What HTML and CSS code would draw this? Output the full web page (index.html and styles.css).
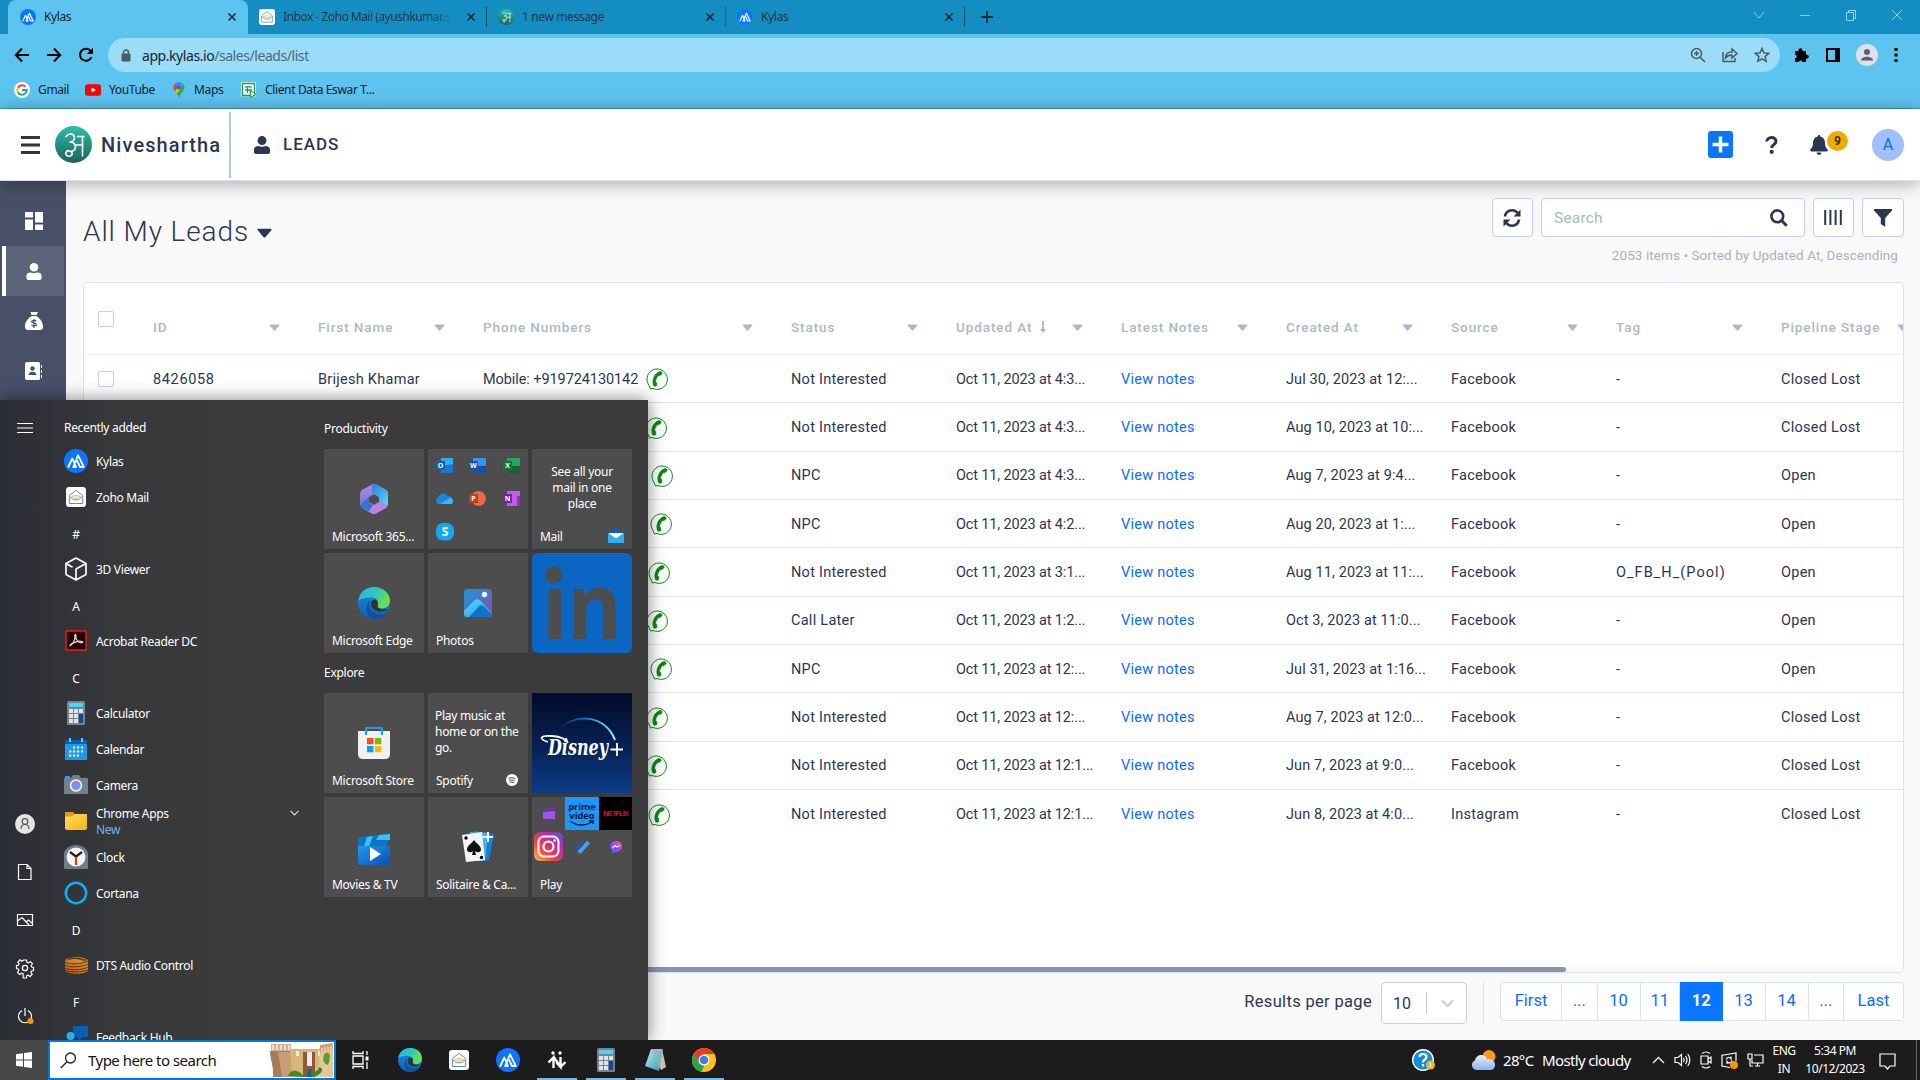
FILE: index.html
```html
<!DOCTYPE html>
<html lang="en">
<head>
<meta charset="utf-8">
<title>Kylas</title>
<link rel="stylesheet" href="styles.css">
</head>
<body>
<svg class="defs" width="0" height="0" aria-hidden="true">
  <defs>
    <linearGradient id="gTeal" x1="0" y1="0" x2="0" y2="1"><stop offset="0" stop-color="#2dbfae"/><stop offset="1" stop-color="#1a6358"/></linearGradient>
    <linearGradient id="gEdge" x1="0" y1="0" x2="1" y2="0.4"><stop offset="0" stop-color="#2bb5e8"/><stop offset=".55" stop-color="#2fc6c0"/><stop offset="1" stop-color="#6be04a"/></linearGradient>
    <linearGradient id="gEdge2" x1="0" y1="0" x2="0" y2="1"><stop offset="0" stop-color="#1a8fe0"/><stop offset="1" stop-color="#0a5fb4"/></linearGradient>
    <linearGradient id="gInsta" x1="0" y1="1" x2="1" y2="0"><stop offset="0" stop-color="#fec053"/><stop offset=".35" stop-color="#f2443e"/><stop offset=".65" stop-color="#c32aa3"/><stop offset="1" stop-color="#5b4fd6"/></linearGradient>
    <linearGradient id="gPhoto" x1="0" y1="0" x2="1" y2="1"><stop offset="0" stop-color="#1697dc"/><stop offset="1" stop-color="#8a4fa8"/></linearGradient>
    <linearGradient id="gPeak" x1="0" y1="0" x2="1" y2="1"><stop offset="0" stop-color="#5ee2ff"/><stop offset="1" stop-color="#1790dc"/></linearGradient>
    <linearGradient id="gFolder" x1="0" y1="0" x2="1" y2="1"><stop offset="0" stop-color="#ffdb66"/><stop offset="1" stop-color="#f8b50c"/></linearGradient>
    <linearGradient id="gMovie" x1="0" y1="0" x2="1" y2="1"><stop offset="0" stop-color="#1f9be8"/><stop offset="1" stop-color="#0a4fb8"/></linearGradient>
    <linearGradient id="gArc" x1="0" y1="0" x2="1" y2="0"><stop offset="0" stop-color="#04103f"/><stop offset=".5" stop-color="#0b7fd0"/><stop offset="1" stop-color="#8ffcff"/></linearGradient>
    <linearGradient id="gMsg" x1="0" y1="1" x2="1" y2="0"><stop offset="0" stop-color="#1e7bff"/><stop offset=".5" stop-color="#a43cff"/><stop offset="1" stop-color="#ff6a68"/></linearGradient>
    <linearGradient id="gLens" x1="0" y1="0" x2="1" y2="1"><stop offset="0" stop-color="#c06be0"/><stop offset="1" stop-color="#3fb4f0"/></linearGradient>
    <linearGradient id="gCloud" x1="0" y1="0" x2="0" y2="1"><stop offset="0" stop-color="#e8f0fc"/><stop offset="1" stop-color="#8ab4f0"/></linearGradient>
    <linearGradient id="gNote" x1="0" y1="0" x2="1" y2="1"><stop offset="0" stop-color="#c9f1f5"/><stop offset="1" stop-color="#2a93aa"/></linearGradient>
    <linearGradient id="gDts" x1="0" y1="1" x2=".7" y2="0"><stop offset="0" stop-color="#c9501e"/><stop offset="1" stop-color="#d9a11e"/></linearGradient>
    <linearGradient id="gMA" x1="0" y1="0" x2="0" y2="1"><stop offset="0" stop-color="#b48ae6"/><stop offset="1" stop-color="#5d6fd0"/></linearGradient>
    <linearGradient id="gMB" x1="0" y1="0" x2="1" y2="1"><stop offset="0" stop-color="#2b7fd8"/><stop offset="1" stop-color="#5ad8fb"/></linearGradient>
  </defs>
  <symbol id="kylas" viewBox="0 0 24 24"><circle cx="12" cy="12" r="12" fill="#0a76ff"/><path d="M4.300 18 8.300 9.500 12 18H9.200L14 6.300 19.800 18H16L13.200 12" fill="none" stroke="#fff" stroke-width="1.800" stroke-linejoin="round" stroke-linecap="round"/></symbol>
  <symbol id="zoho" viewBox="0 0 20 20"><rect width="20" height="20" rx="3" fill="#fff"/><path d="M3.300 8.500 10 3.300l6.700 5.200V16.500H3.300z" fill="#fff" stroke="#5f8ec9" stroke-width="1"/><path d="M4 9.500c2.500 4.500 9.500 4.500 12 0" fill="none" stroke="#5f8ec9"/><path d="M5.500 9.500c3-1.300 6-1.300 9 0-2.500 2.300-6.500 2.300-9 0z" fill="#fff1d6" stroke="#f2bd6a"/></symbol>
  <symbol id="nivesh" viewBox="0 0 37 37"><circle cx="18.500" cy="18.500" r="18.500" fill="url(#gTeal)"/><path d="M11 10.500c3-4 8.500-3 8.500 1.500 0 3-3 4-5 4 4 0 6 2 6 5 0 4-5 5.500-8 3.500M19.500 19h8.500M22.500 10.500h6.500M27.500 10.500V30M12 25c-3 3 0 6 3 5 3.500-1 2.500-5-1-5" fill="none" stroke="#fff" stroke-width="1.600" stroke-linecap="round"/></symbol>
  <symbol id="x" viewBox="0 0 10 10"><path d="M1.500 1.500l7 7M8.500 1.500l-7 7" stroke="currentColor" stroke-width="1.700"/></symbol>
  <symbol id="caret" viewBox="0 0 12 8"><path d="M.8.500h10.400q.8.400.2 1.200L6.900 7.200q-.9.800-1.800 0L.6 1.700Q0 .9.800.500z" fill="currentColor"/></symbol>
  <symbol id="person" viewBox="0 0 16 18"><circle cx="8" cy="4.600" r="4.500" fill="currentColor"/><path d="M0 16v-2.500C0 11.200 2 10 4.500 10c2.200 1 4.800 1 7 0C14 10 16 11.200 16 13.500V16c0 1.200-.8 2-2 2H2c-1.200 0-2-.8-2-2z" fill="currentColor"/></symbol>
  <symbol id="wa" viewBox="0 0 22 22"><path d="M2.800 17A10.200 10.200 0 1 1 7 20.500L4.500 21z" fill="#fff" stroke="#0a8a12" stroke-width="1"/><path d="M14.500 3.600c-5.500.8-9 8-7 14 .3.900 3.200.8 3.300-.3l-.2-2.400c0-.9-1.100-.8-1.100-1.600.2-2 1.400-4.200 2.700-5.600.6-.4 1.200.3 1.900-.1l1.700-1.700c.6-.8-.1-2.500-1.300-2.300z" fill="#078a10" stroke="#078a10" stroke-width=".8"/></symbol>
  <symbol id="edge" viewBox="0 0 32 32"><circle cx="16" cy="16" r="16" fill="url(#gEdge2)"/><path d="M.5 13C2 5 8 0 16 0c9.500 0 16 6.500 16 13.500 0 5-3.500 8-7.500 8-4 0-5.500-1.700-5-3 1.400-1.500 1-7.500-5.500-8C8 10 2 12.500.5 13z" fill="url(#gEdge)"/><path d="M12 13c-3.500 7 2 14.500 9 14.500 4.500 0 7.500-1.500 8.500-2.500C26.500 30 21.500 32 17 32 9 31 6 20 12 13z" fill="#10519f"/><path d="M14 13.500c-3 3.500 0 10.500 7 11 4 .3 7-.8 9-2.500-5 1-10.500 0-10.500-3.500 1-1.500.5-5-2-6z" fill="#303438"/></symbol>
  <symbol id="calc" viewBox="0 0 18 24"><rect width="18" height="24" rx="1.500" fill="#77828e"/><rect x="2" y="2" width="14" height="4" fill="#4fd3fb"/><path d="M2 8h4v4H2zM7 8h4v4H7zM12 8h4v4h-4zM2 13h4v4H2zM7 13h4v4H7zM2 18h4v4H2zM7 18h4v4H7z" fill="#dde4ea"/><path d="M12 13h4v9h-4z" fill="#0d4a92"/></symbol>
</svg>

<main class="window">
  <div class="tabstrip">
    <div class="tab tab-active"><svg width="16" height="16"><use href="#kylas"/></svg><span class="tab-title">Kylas</span><svg class="tab-x" width="10" height="10"><use href="#x"/></svg></div>
    <div class="tab"><svg width="16" height="16"><use href="#zoho"/></svg><span class="tab-title fade">Inbox - Zoho Mail (ayushkumar.s</span><svg class="tab-x" width="10" height="10"><use href="#x"/></svg></div>
    <div class="tab"><svg width="16" height="16"><use href="#nivesh"/></svg><span class="tab-title">1 new message</span><svg class="tab-x" width="10" height="10"><use href="#x"/></svg></div>
    <div class="tab"><svg width="16" height="16"><use href="#kylas"/></svg><span class="tab-title">Kylas</span><svg class="tab-x" width="10" height="10"><use href="#x"/></svg></div>
    <svg class="newtab" width="14" height="14" viewBox="0 0 14 14"><path d="M7 1v12M1 7h12" stroke="#1b2a33" stroke-width="1.800"/></svg>
    <div class="wincontrols">
      <svg width="12" height="12" viewBox="0 0 12 12"><path d="M1 3l5 6 5-6"/></svg>
      <svg width="12" height="12" viewBox="0 0 12 12"><path d="M1 6.500h10"/></svg>
      <svg width="12" height="12" viewBox="0 0 12 12"><path d="M1.500 3.500h7v8h-7zM3.500 3.500v-2h7v8h-2"/></svg>
      <svg width="12" height="12" viewBox="0 0 12 12"><path d="M1 1l10 10M11 1L1 11"/></svg>
    </div>
  </div>

  <div class="toolbar">
    <svg width="16" height="16" viewBox="0 0 16 16"><path d="M15 8H2M8 1.500 1.800 8 8 14.500" fill="none" stroke="#000" stroke-width="2"/></svg>
    <svg width="16" height="16" viewBox="0 0 16 16"><path d="M1 8h13M8 1.500 14.200 8 8 14.500" fill="none" stroke="#000" stroke-width="2"/></svg>
    <svg width="16" height="16" viewBox="0 0 16 16"><path d="M13.500 10.200A6 6 0 1 1 12.700 4" fill="none" stroke="#000" stroke-width="2"/><path d="M15 .8V7H8.800z"/></svg>
    <div class="omnibox">
      <svg width="10" height="13" viewBox="0 0 10 13"><path d="M1 5h8v7H1z" fill="#4c5a63" stroke="#4c5a63"/><path d="M2.500 5V3.500a2.500 2.500 0 0 1 5 0V5" fill="none" stroke="#4c5a63" stroke-width="1.400"/></svg>
      <span class="url"><b>app.kylas.io</b>/sales/leads/list</span>
      <div class="omni-icons">
        <svg width="16" height="16" viewBox="0 0 16 16"><circle cx="6.500" cy="6.500" r="5"/><path d="M10.200 10.200 15 15M6.500 4v5M4 6.500h5"/></svg>
        <svg width="16" height="16" viewBox="0 0 16 16"><path d="M1 5v9.500h12V11M3.500 11c0-4 2.500-6 6.500-6V2l5 4.500-5 4.500V8C7 8 5 9 3.500 11z" stroke-width="1.200"/></svg>
        <svg width="16" height="16" viewBox="0 0 16 16"><path d="M8 1.500l1.900 4.400 4.800.5-3.600 3.200 1 4.700L8 11.900l-4.100 2.400 1-4.700L1.300 6.400l4.800-.5z"/></svg>
      </div>
    </div>
    <svg class="ext" width="16" height="16" viewBox="0 0 16 16"><path d="M1 4h3.700a2 2 0 1 1 3.600 0H12v3.800a2 2 0 1 1 0 3.700V15H8.500a1.800 1.800 0 0 0-3.500 0H1v-3.700a1.800 1.800 0 0 0 0-3.600z"/></svg>
    <svg width="14" height="14" viewBox="0 0 14 14"><path d="M1 1h12v12H1z" fill="none" stroke="#000" stroke-width="2"/><path d="M9 1h4v12H9z"/></svg>
    <svg width="22" height="22" viewBox="0 0 22 22"><circle cx="11" cy="11" r="11" fill="#dfe1e6"/><circle cx="11" cy="8" r="3" fill="#56607a"/><path d="M5 16.500c0-5 12-5 12 0z" fill="#56607a"/></svg>
    <svg width="4" height="14" viewBox="0 0 4 14"><path d="M.5 0h3v3h-3zM.5 5.500h3v3h-3zM.5 11h3v3h-3z"/></svg>
  </div>

  <div class="bookmarks">
    <svg width="16" height="16" viewBox="0 0 16 16"><circle cx="8" cy="8" r="8" fill="#fff"/><g fill="none" stroke-width="2"><path d="M11.400 4.600A4.700 4.700 0 0 0 3.900 5.800" stroke="#ea4335"/><path d="M3.900 5.700a4.700 4.700 0 0 0 0 4.600" stroke="#fbbc05"/><path d="M3.900 10.200a4.700 4.700 0 0 0 7.300 1.300" stroke="#34a853"/><path d="M11.200 11.500A4.700 4.700 0 0 0 12.700 8H8" stroke="#4285f4"/></g></svg><span class="bm-gmail">Gmail</span>
    <svg width="16" height="16" viewBox="0 0 16 16"><rect y="2.300" width="16" height="11.400" rx="2.500" fill="#f00"/><path d="M6.500 5.500v5L11 8z" fill="#fff"/></svg><span class="bm-yt">YouTube</span>
    <svg width="14" height="16" viewBox="0 0 14 16"><path d="M7 0a5.500 5.500 0 0 0-4.300 9L10.800 1.600A5.500 5.500 0 0 0 7 0z" fill="#4285f4"/><path d="M2.700 2 1.500 5.500C1.500 8 3 9 4 10.300l3-3.600z" fill="#ea4335"/><path d="M4 10.300 10.900 1.700c2 1.600 2.200 4.800.4 7C9.500 11 8 12.500 7 16c-.7-2.500-1.500-4-3-5.700z" fill="#34a853"/><path d="M3 9l3-3.500 2.500 2L5 11.600z" fill="#fbbc04"/><circle cx="7" cy="5.500" r="2" fill="#1a73e8"/></svg><span class="bm-maps">Maps</span>
    <svg width="16" height="16" viewBox="0 0 16 16"><path d="M0 0h15v14.500H0z" fill="#eefaf2"/><path d="M1.500 1.500h12v12h-12z" fill="#fff" stroke="#1d9a4a" stroke-width="1.300"/><path d="M4 4.800h7M4 8h7M6.500 4.800V11" stroke="#1d9a4a" stroke-width="1.300" fill="none"/><path d="M9.500 9 15 12l-5.500 3.500z" fill="#fff" stroke="#1d9a4a"/></svg><span>Client Data Eswar T...</span>
  </div>

  <header class="apphead">
    <svg width="19" height="18" viewBox="0 0 19 18"><path d="M0 1.500h19M0 9h19M0 16.500h19" stroke="#2d3650" stroke-width="3"/></svg>
    <svg class="brandlogo" width="37" height="37"><use href="#nivesh"/></svg>
    <span class="brand">Niveshartha</span>
    <span class="headrule"></span>
    <svg class="navy" width="16" height="18"><use href="#person"/></svg>
    <span class="section">LEADS</span>
    <div class="headright">
      <span class="plus"><svg width="17" height="17" viewBox="0 0 17 17"><path d="M8.500.5v16M.5 8.500h16" stroke="#fff" stroke-width="3.400"/></svg></span>
      <svg class="question" width="13" height="18" viewBox="0 0 13 18"><path d="M1.800 5.500C1.800.5 11 .2 11 5.200c0 3.300-4.300 3-4.300 6.800" fill="none" stroke="#2d3650" stroke-width="3"/><circle cx="6.700" cy="15.800" r="2.100" fill="#2d3650"/></svg>
      <svg class="bell" width="18" height="20" viewBox="0 0 18 20"><path d="M9 0c.9 0 1.300.6 1.300 1.400 3 .7 4.700 3 4.700 6.100 0 4.500 1.300 5.500 2.500 6.800.8 1 .2 2.200-1 2.200h-15c-1.200 0-1.800-1.200-1-2.200C1.700 13 3 12 3 7.500c0-3.100 1.700-5.400 4.700-6.100C7.700.6 8.100 0 9 0zM6.500 17.500h5a2.500 2.500 0 0 1-5 0z" fill="#2d3650"/></svg>
      <span class="badge">9</span>
      <span class="avatar">A</span>
    </div>
  </header>

  <div class="appbody">
    <nav class="sidebar">
      <span class="side"><svg width="18" height="18" viewBox="0 0 18 18"><path d="M0 0h8v5.500H0zM0 7.500h8V18H0zM10 0h8v10.500h-8zM10 12.500h8V18h-8z" fill="#fff"/></svg></span>
      <span class="side side-on"><svg width="16" height="17"><use href="#person"/></svg></span>
      <span class="side"><svg width="18" height="18" viewBox="0 0 18 18"><path d="M5.500 0h7.500L11.500 3h-5zM6.500 4h5C15 6.500 18 10 18 14.500c0 2.500-1 3.500-3 3.500H3c-2 0-3-1-3-3.500C0 10 3 6.500 6.500 4z" fill="#fff"/><path d="M11.300 9.200c-.8-1-4.600-1.200-4.600.5 0 1.800 4.800.8 4.800 2.900 0 1.800-4 1.700-5 .4M9 7v9" fill="none" stroke="#475067" stroke-width="1.200"/></svg></span>
      <span class="side"><svg width="17" height="18" viewBox="0 0 17 18"><path d="M2 0h11.500q1.500 0 1.500 1.500v15q0 1.500-1.500 1.500H2q-2 0-2-2V2Q0 0 2 0zM16 3h1v3h-1zM16 8h1v3h-1zM16 13h1v3h-1z" fill="#fff"/><circle cx="7.500" cy="6.500" r="2.200" fill="#475067"/><path d="M3.500 13c0-4.500 8-4.500 8 0z" fill="#475067"/></svg></span>
    </nav>

    <section class="content">
      <div class="pagehead">
        <h1>All My Leads</h1><svg class="navy titlecaret" width="15" height="10"><use href="#caret"/></svg>
        <div class="tools">
          <div class="toolrow">
            <span class="tool tool-a"><svg width="18" height="18" viewBox="0 0 18 18"><path d="M2 7.500A7 7 0 0 1 14.500 4M16 10.500A7 7 0 0 1 3.500 14" fill="none" stroke="#2d3650" stroke-width="2.600"/><path d="M17.500.5v7h-7zM.5 17.500v-7h7z" fill="#2d3650"/></svg></span>
            <span class="tool search"><span>Search</span><svg width="18" height="18" viewBox="0 0 18 18"><circle cx="7.300" cy="7.300" r="5.900" fill="none" stroke="#2d3650" stroke-width="2.600"/><path d="M11.500 11.500 16.700 16.700" stroke="#2d3650" stroke-width="3"/></svg></span>
            <span class="tool tool-a"><svg width="18" height="15" viewBox="0 0 18 15"><path d="M1.200 0v15M6.400 0v15M11.600 0v15M16.800 0v15" stroke="#2d3650" stroke-width="2"/></svg></span>
            <span class="tool tool-b"><svg width="18" height="18" viewBox="0 0 18 18"><path d="M0 0h18v1.500L11.200 9v9L6.800 15V9L0 1.500z" fill="#2d3650"/></svg></span>
          </div>
          <div class="count">2053 items • Sorted by Updated At, Descending</div>
        </div>
      </div>

      <div class="card">
        <div class="row thead">
          <span class="box"></span>
          <span class="th">ID<svg width="11" height="7"><use href="#caret"/></svg></span>
          <span class="th">First Name<svg width="11" height="7"><use href="#caret"/></svg></span>
          <span class="th">Phone Numbers<svg width="11" height="7"><use href="#caret"/></svg></span>
          <span class="th">Status<svg width="11" height="7"><use href="#caret"/></svg></span>
          <span class="th">Updated At<svg class="sort" width="6" height="12" viewBox="0 0 6 12"><path d="M3 0v10" stroke="currentColor" stroke-width="1.800"/><path d="M0 8h6L3 12z" fill="currentColor"/></svg><svg width="11" height="7"><use href="#caret"/></svg></span>
          <span class="th">Latest Notes<svg width="11" height="7"><use href="#caret"/></svg></span>
          <span class="th">Created At<svg width="11" height="7"><use href="#caret"/></svg></span>
          <span class="th">Source<svg width="11" height="7"><use href="#caret"/></svg></span>
          <span class="th">Tag<svg width="11" height="7"><use href="#caret"/></svg></span>
          <span class="th">Pipeline Stage<svg width="11" height="7"><use href="#caret"/></svg></span>
        </div>
        <div class="row"><span class="box"></span><span class="id">8426058</span><span>Brijesh Khamar</span><span class="phone"><span class="num">Mobile: +919724130142</span><svg class="wa" width="22" height="22"><use href="#wa"/></svg></span><span>Not Interested</span><span class="upd">Oct 11, 2023 at 4:3...</span><a>View notes</a><span class="crt">Jul 30, 2023 at 12:...</span><span>Facebook</span><span>-</span><span>Closed Lost</span></div>
        <div class="row"><span class="box"></span><span></span><span></span><span class="phone p2"><svg class="wa" width="22" height="22"><use href="#wa"/></svg></span><span>Not Interested</span><span class="upd">Oct 11, 2023 at 4:3...</span><a>View notes</a><span class="crt">Aug 10, 2023 at 10:...</span><span>Facebook</span><span>-</span><span>Closed Lost</span></div>
        <div class="row"><span class="box"></span><span></span><span></span><span class="phone p6"><svg class="wa" width="22" height="22"><use href="#wa"/></svg></span><span>NPC</span><span class="upd">Oct 11, 2023 at 4:3...</span><a>View notes</a><span class="crt">Aug 7, 2023 at 9:4...</span><span>Facebook</span><span>-</span><span>Open</span></div>
        <div class="row"><span class="box"></span><span></span><span></span><span class="phone p5"><svg class="wa" width="22" height="22"><use href="#wa"/></svg></span><span>NPC</span><span class="upd">Oct 11, 2023 at 4:2...</span><a>View notes</a><span class="crt">Aug 20, 2023 at 1:...</span><span>Facebook</span><span>-</span><span>Open</span></div>
        <div class="row"><span class="box"></span><span></span><span></span><span class="phone p4"><svg class="wa" width="22" height="22"><use href="#wa"/></svg></span><span>Not Interested</span><span class="upd">Oct 11, 2023 at 3:1...</span><a>View notes</a><span class="crt">Aug 11, 2023 at 11:...</span><span>Facebook</span><span class="tag">O_FB_H_(Pool)</span><span>Open</span></div>
        <div class="row"><span class="box"></span><span></span><span></span><span class="phone p3"><svg class="wa" width="22" height="22"><use href="#wa"/></svg></span><span>Call Later</span><span class="upd">Oct 11, 2023 at 1:2...</span><a>View notes</a><span class="crt">Oct 3, 2023 at 11:0...</span><span>Facebook</span><span>-</span><span>Open</span></div>
        <div class="row"><span class="box"></span><span></span><span></span><span class="phone p5"><svg class="wa" width="22" height="22"><use href="#wa"/></svg></span><span>NPC</span><span class="upd">Oct 11, 2023 at 12:...</span><a>View notes</a><span class="crt">Jul 31, 2023 at 1:16...</span><span>Facebook</span><span>-</span><span>Open</span></div>
        <div class="row"><span class="box"></span><span></span><span></span><span class="phone p3"><svg class="wa" width="22" height="22"><use href="#wa"/></svg></span><span>Not Interested</span><span class="upd">Oct 11, 2023 at 12:...</span><a>View notes</a><span class="crt">Aug 7, 2023 at 12:0...</span><span>Facebook</span><span>-</span><span>Closed Lost</span></div>
        <div class="row"><span class="box"></span><span></span><span></span><span class="phone p2"><svg class="wa" width="22" height="22"><use href="#wa"/></svg></span><span>Not Interested</span><span class="upd">Oct 11, 2023 at 12:1...</span><a>View notes</a><span class="crt">Jun 7, 2023 at 9:0...</span><span>Facebook</span><span>-</span><span>Closed Lost</span></div>
        <div class="row last"><span class="box"></span><span></span><span></span><span class="phone p4"><svg class="wa" width="22" height="22"><use href="#wa"/></svg></span><span>Not Interested</span><span class="upd">Oct 11, 2023 at 12:1...</span><a>View notes</a><span class="crt">Jun 8, 2023 at 4:0...</span><span>Instagram</span><span>-</span><span>Closed Lost</span></div>
        <div class="hscroll"><span></span></div>
      </div>

      <div class="pager">
        <span class="rpp">Results per page</span>
        <span class="select"><span>10</span><i></i><svg width="13" height="9" viewBox="0 0 13 9"><path d="M1 1.500l5.500 5.500L12 1.500" fill="none" stroke="#ccc" stroke-width="2.200"/></svg></span>
        <i class="pagerule"></i>
        <div class="pages"><a class="w1">First</a><a class="w2">...</a><a class="w3">10</a><a class="w4">11</a><a class="on w3">12</a><a class="w3">13</a><a class="w3">14</a><a class="w2">...</a><a class="w5">Last</a></div>
      </div>
    </section>
  </div>
</main>

<aside class="start">
  <div class="rail">
    <svg width="16" height="12" viewBox="0 0 16 12"><path d="M0 1.500h16M0 6h16M0 10.500h16"/></svg>
    <div class="railbottom">
      <svg width="20" height="20" viewBox="0 0 20 20"><circle cx="10" cy="10" r="10" fill="#e4e4e4" stroke="none"/><circle cx="10" cy="7.500" r="2.800" stroke="#555"/><path d="M6 15c0-6 8-6 8 0" stroke="#555"/></svg>
      <svg width="16" height="18" viewBox="0 0 16 18"><path d="M1.500 1.500h8.500l4 4v11h-12.500zM10 1.500v4h4"/></svg>
      <svg width="16" height="14" viewBox="0 0 16 14"><path d="M.5 1.500h15v11H.5zM.5 8 5 4.500l7.500 8M9 9l2.500-2 4 3.500"/></svg>
      <svg width="18" height="18" viewBox="0 0 18 18"><circle cx="9" cy="9" r="2.600"/><path d="M7.500 1h3l.5 2.300 1.300.6 2.100-1.200 2 2-1.200 2.100.5 1.300 1.800.4v3l-2 .5-.6 1.300 1.300 2-2.100 2.100-2-1.200-1.300.5-.5 2.300h-3L7 14.700l-1.300-.5-2 1.200-2.100-2.100 1.200-2L2.300 10 .5 9.500v-3l2-.3.600-1.300L1.900 3 4 .9l1.800 1.300L7 1.600z"/></svg>
      <svg width="18" height="18" viewBox="0 0 18 18"><path d="M6 3.500a6.500 6.500 0 1 0 6 0M9 1v8" stroke-width="1.500"/><circle cx="14.500" cy="14" r="3" fill="#ff9500" stroke="none"/></svg>
    </div>
  </div>
  <div class="apps">
    <div class="recent">Recently added</div>
    <div class="app"><span><svg width="24" height="24"><use href="#kylas"/></svg></span>Kylas</div>
    <div class="app"><span><svg width="20" height="20"><use href="#zoho"/></svg></span>Zoho Mail</div>
    <div class="app letter"><span>#</span></div>
    <div class="app"><span><svg width="22" height="24" viewBox="0 0 22 24"><path d="M11 1l10 5.500v11L11 23 1 17.500v-11zM1 6.500l6.500 3.700M21 6.500 11 12v11" fill="none" stroke="#fff" stroke-width="1.700" stroke-linejoin="round"/></svg></span>3D Viewer</div>
    <div class="app letter"><span>A</span></div>
    <div class="app"><span><svg class="up1" width="22" height="21" viewBox="0 0 22 21"><path d="M1 1h20v19H1z" fill="#260303" stroke="#f21d0d" stroke-width="1.400"/><path d="M4.500 16c3-1 6-6 5.500-10.500C9.700 3.500 11.500 4 10.800 7c-.5 3 4 6.500 6.700 5.500 1-.5-1-1.700-4-1.200-3.500.5-6 1.500-8.500 3.500" fill="none" stroke="#e8dede" stroke-width="1.200"/></svg></span>Acrobat Reader DC</div>
    <div class="app letter"><span>C</span></div>
    <div class="app"><span><svg width="18" height="24"><use href="#calc"/></svg></span>Calculator</div>
    <div class="app"><span><svg width="22" height="22" viewBox="0 0 22 22"><path d="M0 2h22v20H0z" fill="#1c9be6"/><path d="M0 2h22v4H0z" fill="#0a5fb4"/><path d="M5 0v4M17 0v4" stroke="#4fd3fb" stroke-width="2"/><path d="M8 9.500h10M4 13.500h14M4 17.500h10" stroke="#fff" stroke-width="2.200" stroke-dasharray="2.200 1.800"/></svg></span>Calendar</div>
    <div class="app"><span><svg width="24" height="20" viewBox="0 0 24 20"><path d="M0 3h7l2-3h6l2 3h7v16H0z" fill="#75808b"/><path d="M1 1h5v3H1z" fill="#2a9fe0"/><circle cx="12" cy="10.500" r="6.200" fill="#f4f6f8"/><circle cx="12" cy="10.500" r="4.700" fill="url(#gLens)"/></svg></span>Camera</div>
    <div class="app two"><span><svg width="22" height="20" viewBox="0 0 22 20"><path d="M0 1h8l2 2.500h12V10H0z" fill="#e39a0b"/><path d="M0 5.500h7L9.500 3H22v14q0 2-2 2H2q-2 0-2-2z" fill="url(#gFolder)"/></svg></span><div>Chrome Apps<b>New</b></div><svg class="expand" width="9" height="6" viewBox="0 0 9 6"><path d="M.5.800 4.500 4.800 8.500.800" fill="none" stroke="#ddd" stroke-width="1.200"/></svg></div>
    <div class="app"><span><svg width="24" height="24" viewBox="0 0 24 24"><path d="M0 24V9C0 4 6 0 12 0s12 4 12 9v15z" fill="#6f7b87"/><circle cx="12" cy="12" r="9.500" fill="#f3f5f6"/><path d="M6 7l6 4.500L18 7" fill="none" stroke="#222" stroke-width="2.200"/><path d="M12 12v8" stroke="#d83b01" stroke-width="2.200"/></svg></span>Clock</div>
    <div class="app"><span><svg width="24" height="24" viewBox="0 0 24 24"><circle cx="12" cy="12" r="10.300" fill="none" stroke="#0a84b8" stroke-width="2.800"/><circle cx="12" cy="12" r="10" fill="none" stroke="#10bdff" stroke-width="1.500"/></svg></span>Cortana</div>
    <div class="app letter"><span>D</span></div>
    <div class="app"><span><svg width="23" height="17" viewBox="0 0 23 17"><path d="M0 4c0-5 23-5 23 0v9c0 5-23 5-23 0z" fill="url(#gDts)"/><path d="M0 5c4 3 18 2 23-1M0 8c4 3 18 2 23-1M0 11c4 3 18 2 23-1M0 13c4 3 18 2 23 0M2 3c6-3 15-1 20 2M4 2c6-2 12 0 18 1" fill="none" stroke="#4b2c14" stroke-width=".9"/></svg></span>DTS Audio Control</div>
    <div class="app letter"><span>F</span></div>
    <div class="app"><span><svg width="23" height="22" viewBox="0 0 23 22"><path d="M8 0h15v11h-6l-4 4v-4H8z" fill="#0a5fb4"/><circle cx="5.500" cy="10" r="4" fill="#2db0f0"/><path d="M0 21c0-8 11-8 11 0z" fill="#2db0f0"/></svg></span>Feedback Hub</div>
  </div>
  <div class="tiles">
    <h2>Productivity</h2>
    <div class="tilegrid">
      <div class="tile"><svg width="28" height="30" viewBox="0 0 28 30"><path fill-rule="evenodd" d="M11 1q3-2 6 0l9 5q2 1 2 4v10q0 2-2 4l-9 5q-3 2-6 0l-9-5q-2-2-2-4V10q0-3 2-4zM14 10l-5 3v5l5 3 5-3v-5z" fill="url(#gMA)"/><path d="M12 .7q3-1.400 5 .3l9 5q2 1 2 4v10q0 1-1 2l-8-5v-4l-7-4V5z" fill="url(#gMB)"/><path d="M1 23l8-5 5 3 6-3.500 7.500 4Q27 23 26 24l-9 5q-3 2-6 0z" fill="#b784e4"/><path d="M0 21l9-8v5l4 3-4 6-7-3z" fill="#3a72d0"/></svg><em>Microsoft 365...</em></div>
      <div class="tile folder">
        <svg width="17" height="16" viewBox="0 0 17 16"><path d="M5 0h12v15H5z" fill="#38a9ee"/><path d="M5 8l12-2v9H5z" fill="#1e77cf"/><path d="M0 3h9v9H0z" fill="#0f62b8"/><text x="4.500" y="10.300" class="glyph">O</text></svg>
        <svg width="17" height="16" viewBox="0 0 17 16"><path d="M4 0h13v15H4z" fill="#3a93e6"/><path d="M4 8h13v7H4z" fill="#174ea8"/><path d="M0 3h9v9H0z" fill="#1652b4"/><text x="4.500" y="10.300" class="glyph">W</text></svg>
        <svg width="17" height="16" viewBox="0 0 17 16"><path d="M4 0h13v15H4z" fill="#21a565"/><path d="M4 8h13v7H4z" fill="#14633a"/><path d="M0 3h9v9H0z" fill="#10773f"/><text x="4.500" y="10.300" class="glyph">X</text></svg>
        <svg width="17" height="16" viewBox="0 0 17 16"><path d="M3 13a3.500 3.500 0 0 1-1-6.500C4 2 9 1 11.500 5c3.500 0 5.500 2 5.500 5 0 2-1.500 3-3 3z" fill="#168ae0"/><path d="M4 13 14 7c2 0 3 2 3 3.500S16 13 14 13z" fill="#37b8ff"/></svg>
        <svg width="17" height="16" viewBox="0 0 17 16"><circle cx="9.500" cy="7.500" r="7.500" fill="#ec6a42"/><path d="M0 3h9v9H0z" fill="#c43e1c"/><text x="4.500" y="10.300" class="glyph">P</text></svg>
        <svg width="17" height="16" viewBox="0 0 17 16"><path d="M4 0h13v15H4z" fill="#c45ae8"/><path d="M14 5h3v10h-3z" fill="#8e2bc0"/><path d="M0 3h9v9H0z" fill="#7a1ea8"/><text x="4.500" y="10.300" class="glyph">N</text></svg>
        <svg width="18" height="18" viewBox="0 0 18 18"><rect width="18" height="17.500" rx="7" fill="#15a7ee"/><text x="9" y="13.300" class="glyph s">S</text></svg>
      </div>
      <div class="tile mail"><p>See all your mail in one place</p><em>Mail</em><svg width="16" height="15" viewBox="0 0 16 15"><path d="M0 5 8 0l8 5v10H0z" fill="#0d5db0"/><path d="M1 5h14v6H1z" fill="#fff"/><path d="M0 5l8 5.500L16 5v10H0z" fill="#2aaef0"/></svg></div>
      <div class="tile"><svg width="32" height="32"><use href="#edge"/></svg><em>Microsoft Edge</em></div>
      <div class="tile"><svg width="28" height="28" viewBox="0 0 28 28"><rect width="28" height="28" rx="3.500" fill="url(#gPhoto)"/><path d="M0 22 11 11q3-2 6 1l11 12v1q0 3-3 3H3q-3 0-3-3z" fill="url(#gPeak)"/><path d="M5 28 16 16.500q2-1 4 1l8 8q-1 2.500-3 2.500z" fill="#1172c8"/><circle cx="20.500" cy="5.500" r="2.700" fill="#eef4ff"/></svg><em>Photos</em></div>
      <div class="tile linkedin"><svg width="100" height="100" viewBox="0 0 100 100"><text x="50" y="86" text-anchor="middle" textLength="80" lengthAdjust="spacingAndGlyphs">ın</text><circle cx="22" cy="22" r="8.500"/></svg></div>
    </div>
    <h2 class="h2b">Explore</h2>
    <div class="tilegrid">
      <div class="tile"><svg width="32" height="32" viewBox="0 0 32 32"><path d="M0 4h32v23q0 5-5 5H5q-5 0-5-5z" fill="#f1f1f3"/><path d="M8 8V1h16v7" fill="none" stroke="#1c9bea" stroke-width="2.200"/><path d="M9 11h6.500v6.300H9z" fill="#f25022"/><path d="M17 11h6.300v6.300H17z" fill="#7fba00"/><path d="M9 19h6.500v6.300H9z" fill="#00a4ef"/><path d="M17 19h6.300v6.300H17z" fill="#ffb900"/></svg><em>Microsoft Store</em></div>
      <div class="tile spotify"><p>Play music at home or on the go.</p><em>Spotify</em><svg width="12" height="12" viewBox="0 0 12 12"><circle cx="6" cy="6" r="6" fill="#fff"/><path d="M2.500 4.200c2.500-.8 5-.5 7 .6M3 6.300c2-.6 4-.4 5.700.6M3.500 8.200c1.600-.4 3.200-.2 4.500.5" fill="none" stroke="#444" stroke-width="1"/></svg></div>
      <div class="tile disney"><svg width="100" height="100" viewBox="0 0 100 100"><path d="M26 38C40 20 72 20 83 47" fill="none" stroke="url(#gArc)" stroke-width="2"/><path d="M16 49C6 46 8 42 20 43c8 .6 14 3 16 7" fill="none" stroke="#fff" stroke-width="1.800"/><text x="16" y="62" textLength="60" lengthAdjust="spacingAndGlyphs">Disney</text><path d="M85 50v13M78.500 56.500h12.500" stroke="#fff" stroke-width="1.800"/></svg></div>
      <div class="tile"><svg class="dn3" width="32" height="32" viewBox="0 0 32 32"><path d="M0 13h32v17q0 2-2 2H2q-2 0-2-2z" fill="url(#gMovie)"/><path d="M0 13V6q0-2 2-2.300L32 1v5l-4 7z" fill="#0e73c4"/><path d="M6 13 9 4l6-1-4 10zM18 7l3-5 11-1v6z" fill="#39c0f5"/><path d="M12 14v14l11-7z" fill="#fff"/></svg><em>Movies &amp; TV</em></div>
      <div class="tile"><svg width="32" height="32" viewBox="0 0 32 32"><path d="M12 0 32 3l-5 26-12 1z" fill="#1583d0"/><path d="M8 1l18 1-3 28H10z" fill="#39b5ee"/><path d="M0 4 20 1l3 28L4 31z" fill="#f4f4f6"/><path d="M12 9c3 4 7 6 7 9.500 0 3-4 3.500-6 1.500l1 4h-4l1-4c-2 2-6 1.500-6-1.500C5 15 9 13 12 9z" fill="#111"/><circle cx="4" cy="7" r="1.700"/><circle cx="19.500" cy="26.500" r="1.700"/><path d="M26 1v10M21 6h10" stroke="#fff" stroke-width="2"/></svg><em>Solitaire &amp; Ca...</em></div>
      <div class="tile play">
        <div class="mini"><svg width="12" height="11" viewBox="0 0 12 11"><path d="M0 2 12 0v11H0z" fill="#9e55e8"/><path d="M0 2 12 0v3L0 4z" fill="#6030b0"/></svg></div>
        <div class="mini prime"><span>prime</span><span>video</span><svg width="26" height="6" viewBox="0 0 26 6"><path d="M1 1c7 5 15 5 22 1M20 .8h4.500L24 4" fill="none" stroke="#0b1a2c" stroke-width="1.400"/></svg></div>
        <div class="mini netflix">NETFLIX</div>
        <div class="mini"><svg width="29" height="29" viewBox="0 0 29 29"><rect width="29" height="29" rx="6" fill="url(#gInsta)"/><rect x="4.500" y="4.500" width="20" height="20" rx="5.500" fill="none" stroke="#fff" stroke-width="2"/><circle cx="14.500" cy="14.500" r="5" fill="none" stroke="#fff" stroke-width="2.200"/><circle cx="20.500" cy="8.500" r="1.300" fill="#fff"/></svg></div>
        <div class="mini"><svg width="16" height="14" viewBox="0 0 16 14"><path d="M0 6.500 3 4l6 6-3 3.500z" fill="#1c58b8"/><path d="M3.500 11.500 13 .8 16 3.500 6.500 14z" fill="#4a9cf5"/></svg></div>
        <div class="mini"><svg width="12" height="12" viewBox="0 0 12 12"><path d="M6 0c8 0 8 11 0 11l-4 1V9.500C-1.500 6 0 0 6 0z" fill="url(#gMsg)"/><path d="M2.500 7l2.500-2.500L7 6l2.500-2" fill="none" stroke="#fff" stroke-width="1.200"/></svg></div>
        <em>Play</em>
      </div>
    </div>
  </div>
</aside>

<footer class="taskbar">
  <div class="winbtn"><svg width="16" height="16" viewBox="0 0 16 16"><path d="M0 2.200 7 1.200V7.500H0zM8 1l8-1v7.500H8zM0 8.500h7v6.300L0 13.800zM8 8.500h8V16l-8-1z" fill="#fff"/></svg></div>
  <div class="tsearch">
    <svg width="17" height="17" viewBox="0 0 17 17"><circle cx="10.500" cy="6" r="5" fill="none" stroke="#222" stroke-width="1.300"/><path d="M7 9.700.800 16" stroke="#222" stroke-width="1.300"/></svg>
    <span>Type here to search</span>
    <svg class="scene" width="63" height="34" viewBox="0 0 63 34"><path d="M0 8h22V34H3C4 24 0 16 0 8z" fill="#a57c56"/><path d="M8 9h14v25H12z" fill="#c79f74"/><path d="M1 1h20v7H1z" fill="#d6ae98"/><path d="M3 2v5M7 2v5M11 2v5M15 2v5M19 2v5" stroke="#fff" stroke-width="1.200"/><path d="M20 6h36v28H22z" fill="#d9b57c"/><path d="M33 9h12v25H33z" fill="#8a5b34"/><path d="M37 9h5v14h-5z" fill="#e8ecf2"/><path d="M26 8h3v5h-3zM48 8h3v5h-3z" fill="#f4e8d0"/><path d="M50 2l13-2v9L50 13z" fill="#dc9c66"/><path d="M52 5v6M55 4v6M58 4v6M61 3v6" stroke="#fff4e6"/><path d="M50 10l13-4v28H47z" fill="#e2c798"/><path d="M18 33c3-8 12-6 16 1zM42 34c2-8 6-4 7-10 8 2-1 10-7 10z" fill="#3f8a20"/><path d="M54 12c5-6 8 0 4 10-6-2-5-6-4-10z" fill="#5c9c28"/><path d="M37 34l1-8h4l-1 8z" fill="#0d6a84"/></svg>
  </div>
  <div class="pins">
    <span><svg width="17" height="18" viewBox="0 0 17 18"><path d="M1 0v2.500h10V0M1 18v-2.500h10V18M1 5h10v8H1zM15 0v4M15 11v7" fill="none" stroke="#fff" stroke-width="1.300"/><path d="M13.500 5.500h3v4h-3z" fill="#fff"/></svg></span>
    <span><svg width="24" height="24"><use href="#edge"/></svg></span>
    <span><svg width="20" height="20"><use href="#zoho"/></svg></span>
    <span><svg width="24" height="24"><use href="#kylas"/></svg></span>
    <span class="run"><svg width="22" height="18" viewBox="0 0 22 18"><circle cx="7" cy="2" r="1.700" fill="#fff"/><circle cx="14" cy="2" r="1.700" fill="#fff"/><path d="M2.500 11.500 7.500 6.500V17M8 6.500l6.500 9V6M10.500 11.500l4 4.500 5-5" fill="none" stroke="#fff" stroke-width="2.400"/></svg></span>
    <span class="run"><svg width="18" height="24"><use href="#calc"/></svg></span>
    <span class="run"><svg width="24" height="24" viewBox="0 0 24 24"><path d="M9 1h10l4 18-5 3z" fill="#c8c2b0"/><path d="M8 1l11 2-3 20-14-5z" fill="url(#gNote)"/><path d="M8 1h12v2L16 23z" fill="#8cb8bd" opacity=".6"/></svg></span>
    <span class="run"><svg width="24" height="24" viewBox="0 0 24 24"><circle cx="12" cy="12" r="12" fill="#fbc116"/><path d="M1.600 6A12 12 0 0 1 22.400 6H12L7 15z" fill="#e33b2e"/><path d="M1.600 6 7 15l5 3-2.500 5.800A12 12 0 0 1 1.600 6z" fill="#2ba24c"/><circle cx="12" cy="12" r="5.500" fill="#fff"/><circle cx="12" cy="12" r="4.300" fill="#3b7ded"/></svg></span>
  </div>
  <div class="tray">
    <svg class="help" width="23" height="22" viewBox="0 0 23 22"><circle cx="11" cy="11" r="10.300" fill="#0f8fd8" stroke="#fff" stroke-width="1.400"/><path d="M7.500 8c0-4 7-4 7 0 0 2.500-3.500 2.300-3.500 5.500M11 15v2.500" fill="none" stroke="#fff" stroke-width="2.200"/><circle cx="18.500" cy="16" r="4.500" fill="#f0b429"/><path d="M18.500 13.500v5" stroke="#fff" stroke-width="1.200"/></svg>
    <svg class="weather" width="25" height="20" viewBox="0 0 25 20"><circle cx="18" cy="6.500" r="6.500" fill="#f79a1b"/><path d="M5 20a5 5 0 0 1-1-9.500C5 4 14 3 16 9c5-.5 8 2 8 6 0 3-2 5-5 5z" fill="url(#gCloud)"/></svg>
    <span class="temp">28°C</span><span class="cloudy">Mostly cloudy</span>
    <svg class="up" width="13" height="8" viewBox="0 0 13 8"><path d="M1 7l5.500-5.500L12 7" fill="none" stroke="#fff" stroke-width="1.300"/></svg>
    <svg class="ic" width="17" height="14" viewBox="0 0 17 14"><path d="M1 4.500h3L7.500 1.500v11L4 9.500H1zM9.500 5q1.500 2 0 4M11.500 3q3 4 0 8" /><path d="M13.800 1q4 6 0 12" stroke="#888"/></svg>
    <svg class="ic" width="12" height="18" viewBox="0 0 12 18"><path d="M1 5h7v8H1zM8 8l3-2v6l-3-2M2 2.500q4-3 8 0M2 15.500q4 3 8 0"/></svg>
    <svg class="ic" width="17" height="17" viewBox="0 0 17 17"><path d="M15 9V1L3 3H1v11l8 1.500M5 7.500q2.500-4 5-.5V4.500M11 8.500q-2 4.500-5 1V12"/><circle cx="13" cy="13" r="4" fill="#ff9500" stroke="none"/></svg>
    <svg class="ic" width="17" height="14" viewBox="0 0 17 14"><path d="M7 2h9v8H5V7M8 13h5M10.500 10v3M1 1h4v5H1zM3 6v7h3"/></svg>
    <div class="stack lang"><span>ENG</span><span>IN</span></div>
    <div class="stack clock"><span>5:34 PM</span><span>10/12/2023</span></div>
    <svg class="ic note" width="17" height="17" viewBox="0 0 17 17"><path d="M1 1h15v12h-5l-2.500 3L6 13H1z"/></svg>
    <i class="peek"></i>
  </div>
</footer>
</body>
</html>
```
FILE: styles.css
```css
* { box-sizing: border-box; }
body { margin: 0; width: 1920px; height: 1080px; overflow: hidden; position: relative; display: flex; flex-direction: column; font-family: "Noto Sans", "Open Sans", sans-serif; background: #f9f9fa; }
.defs { position: absolute; }
svg { display: block; flex: none; overflow: visible; }
.window { height: 1040px; flex: none; display: flex; flex-direction: column; overflow: hidden; }

.tabstrip { height: 34px; flex: none; display: flex; align-items: center; background: #148dc2; padding-left: 8px; font-size: 12px; letter-spacing: -.38px; color: #1b3542; }
.tab { width: 239px; height: 34px; display: flex; align-items: center; padding: 0 10px 0 11px; position: relative; flex: none; }
.tab-active { width: 240px; padding-left: 12px; background: #5dc4f0; border-radius: 8px 8px 0 0; color: #10242e; }
.tab:not(.tab-active)::after { content: ""; width: 1px; height: 20px; background: #15506b; position: absolute; right: 0; top: 7px; }
.tab-title { margin-left: 8px; flex: 1; white-space: nowrap; overflow: hidden; line-height: 20px; }
.fade { letter-spacing: -.5px; -webkit-mask-image: linear-gradient(90deg, #000 145px, transparent 172px); mask-image: linear-gradient(90deg, #000 145px, transparent 172px); }
.tab-x { margin: 0 1px 0 auto; color: #1a2b34; }
.newtab { margin-left: 15px; }
.wincontrols { margin-left: auto; display: flex; gap: 34px; padding-right: 17px; }
.wincontrols path { fill: none; stroke: #8fd2f2; stroke-width: 1; }
.wincontrols svg { margin-top: -5px; }

.toolbar { height: 42px; flex: none; display: flex; align-items: center; gap: 16px; background: #5dc4f0; padding: 0 17px 0 14px; }
.omnibox { height: 34px; width: 1672px; margin-left: -2px; border-radius: 17px; background: #9bddf8; display: flex; align-items: center; padding-left: 13px; }
.url { margin-left: 11px; font-size: 14px; letter-spacing: -.44px; color: #4b6a79; }
.url b { font-weight: 400; color: #13262f; }
.omni-icons { margin-left: auto; display: flex; gap: 16px; padding-right: 10px; }
.omni-icons path, .omni-icons circle { fill: none; stroke: #4c5a63; stroke-width: 1.500; }
.ext { margin-left: -2px; }

.bookmarks { height: 33px; flex: none; background: #5dc4f0; border-bottom: 1px solid #3f97bd; display: flex; align-items: center; padding: 0 0 4px 14px; font-size: 12px; letter-spacing: -.36px; color: #0f2029; }
.bookmarks span { margin-left: 8px; white-space: nowrap; line-height: 18px; }
.bm-gmail { width: 47px; } .bm-yt { width: 63px; } .bm-maps { width: 47px; }

.apphead { height: 72px; flex: none; background: #fff; border-bottom: 1px solid #dde1f7; box-shadow: 0 2px 18px rgba(0,0,0,.35); display: flex; align-items: center; padding: 0 16px 0 21px; position: relative; z-index: 2; font-family: Roboto, sans-serif; color: #2d3650; }
.brandlogo { margin-left: 15px; }
.brand { margin-left: 9px; width: 128px; font-size: 20px; font-weight: 500; letter-spacing: 1.100px; }
.headrule { width: 2px; height: 66px; background: #bcc1d8; }
.navy { color: #2d3650; }
.apphead > .navy { margin-left: 23px; }
.section { margin-left: 13px; font-size: 17px; font-weight: 500; letter-spacing: .95px; margin-top: -2px; }
.headright { margin-left: auto; display: flex; align-items: center; }
.plus { width: 25px; height: 27px; border-radius: 3px; background: #0a76ff; display: grid; place-items: center; }
.question { margin-left: 32px; }
.bell { margin-left: 32px; }
.badge { width: 21px; height: 20px; border-radius: 50%; background: #f0ab00; font-size: 12px; font-weight: 700; display: grid; place-items: center; margin: -7px 0 0 -1px; }
.avatar { width: 32px; height: 32px; border-radius: 50%; background: #9fc0fb; color: #0a6cff; font-size: 16px; display: grid; place-items: center; margin-left: 24px; }

.appbody { flex: 1; display: flex; font-family: Roboto, sans-serif; color: #2d3650; }
.sidebar { width: 66px; flex: none; background: #475067; padding: 15px 2px; display: flex; flex-direction: column; }
.side { height: 50px; display: grid; place-items: center; color: #fff; padding-left: 1px; }
.side-on { background: #5a6377; border-left: 4px solid #fff; padding: 0 3px 0 0; }
.content { flex: 1; width: 1854px; padding: 0 16px 0 17px; display: flex; flex-direction: column; }
.pagehead { height: 101px; flex: none; display: flex; align-items: flex-start; }
h1 { margin: 34px 0 0; font-size: 28px; line-height: 34px; font-weight: 300; letter-spacing: .9px; width: 174px; white-space: nowrap; }
.titlecaret { margin-top: 47px; }
.tools { margin-left: auto; padding-top: 17px; }
.toolrow { display: flex; gap: 8px; }
.tool { height: 39px; border: 1px solid #c3cdf2; border-radius: 4px; background: #fff; display: grid; place-items: center; }
.tool-a { width: 41px; } .tool-b { width: 42px; }
.tool-a svg { margin-right: 2px; }
.search { width: 264px; display: flex; justify-content: space-between; align-items: center; padding: 0 16px 0 12px; font-size: 15.500px; letter-spacing: .2px; color: #adb7c6; }
.count { text-align: right; margin: 9px 6px 0 0; font-size: 13.500px; line-height: 18px; letter-spacing: .08px; color: #a9b2bf; }

.card { height: 691px; flex: none; border: 1px solid #dde1f7; border-radius: 5px; background: #fff; overflow: hidden; display: flex; flex-direction: column; }
.row { display: grid; grid-template-columns: 69px 165px 165px 308px repeat(7, 165px); height: 48.350px; flex: none; align-items: center; border-bottom: 1px solid #dde1f7; font-size: 14.500px; letter-spacing: .27px; white-space: nowrap; padding-top: 1px; }
.row.last { border-bottom: 0; }
.row a { color: #0a6cff; }
.row .upd { letter-spacing: -.14px; }
.row .crt { letter-spacing: .1px; }
.row .tag { letter-spacing: 1.050px; }
.row .id { letter-spacing: .65px; }
.thead { height: 72px; border-bottom-color: #edf1fd; color: #adb7c6; font-size: 13.500px; font-weight: 500; letter-spacing: .9px; padding-top: 0; }
.th { display: flex; align-items: center; padding: 17px 38px 0 0; height: 100%; }
.th svg:last-child { margin-left: auto; }
.sort { margin-left: 8px; }
.box { width: 16px; height: 16px; border: 1px solid #c3cdf2; border-radius: 2px; margin-left: 14px; background: #fff; }
.phone { display: flex; align-items: center; padding-left: 162px; }
.row .num { width: 163px; margin-left: -162px; letter-spacing: -.08px; }
.phone { padding-left: 162px; } .p3 { padding-left: 163px; } .p4 { padding-left: 165px; } .p5 { padding-left: 167px; } .p6 { padding-left: 168px; }
.hscroll { margin-top: auto; height: 5px; flex: none; background: #f9f9fa; }
.hscroll span { display: block; width: 1482px; height: 5px; background: #8b94a8; border-radius: 3px; }

.pager { display: flex; justify-content: flex-end; padding-top: 9px; height: 50px; flex: none; }
.rpp { font-size: 16.500px; letter-spacing: .33px; line-height: 40px; margin-right: 9px; white-space: nowrap; }
.select { width: 86px; height: 42px; border: 1px solid #ccc; border-radius: 4px; background: #fff; display: flex; align-items: center; padding-left: 11px; font-size: 16px; }
.select span { width: 33px; }
.select i { width: 1px; height: 22px; background: #ccc; margin-right: 14px; }
.pagerule { width: 1px; height: 42px; background: #dde1f7; margin: 0 16px; }
.pages { display: flex; height: 39px; border: 1px solid #dde1f7; border-radius: 4px; background: #fff; width: 404px; font-size: 16.500px; color: #0a6cff; }
.pages a { border-right: 1px solid #dde1f7; text-align: center; line-height: 35px; flex: none; }
.w1 { width: 61px; } .w2 { width: 35.500px; } .w3 { width: 43px; } .w4 { width: 39.500px; } .w5 { flex: 1 1 auto !important; }
.pages a:last-child { border: 0; }
.pages .on { background: #0a76ff; color: #fff; font-weight: 700; margin: -1px 0; line-height: 37px; border: 0; width: 42.500px; }

.start { position: absolute; left: 0; top: 400px; width: 648px; height: 640px; z-index: 5; display: flex; background: linear-gradient(90deg, #2a2d34 0, #36383a 110px, #3b3b3b 220px, #3b3b3b); box-shadow: 0 0 16px rgba(0,0,0,.5); color: #fff; font-size: 12px; letter-spacing: -.32px; clip-path: inset(-20px -20px 0 0); }
.rail { width: 50px; flex: none; display: flex; flex-direction: column; align-items: center; justify-content: space-between; padding: 22px 0 0; }
.rail > svg path, .railbottom path, .railbottom circle { fill: none; stroke: #fff; stroke-width: 1.200; }
.railbottom svg:first-child circle:first-child { fill: #e4e4e4; stroke: none; }
.railbottom svg:first-child * + * { stroke: #555; }
.railbottom svg:last-child circle { fill: #ff9500; stroke: none; }
.railbottom { display: grid; grid-auto-rows: 48px; place-items: center; }
.apps { width: 274px; flex: none; padding-left: 14px; }
.recent { line-height: 20px; padding-top: 18px; height: 43px; }
.app { height: 36px; display: flex; align-items: center; white-space: nowrap; }
.app > span { width: 24px; margin-right: 8px; display: grid; place-items: center; }
.letter { padding-top: 3px; }
.up1 { margin-top: -2px; }
.two div { line-height: 16px; width: 194px; margin-top: 2px; }
.two b { display: block; font-weight: 400; color: #6fb3e8; }
.expand { margin-top: -16px; }
.tiles { flex: none; width: 308px; letter-spacing: -.28px; }
h2 { font-size: 12px; font-weight: 400; line-height: 20px; margin: 19px 0 10px; }
h2.h2b { margin: 10px 0; }
.tilegrid { display: grid; grid-template-columns: repeat(3, 100px); grid-auto-rows: 100px; gap: 4px; }
.tile { background: #4d4d4d; position: relative; display: grid; place-items: center; }
.tile em { position: absolute; left: 8px; bottom: 4px; font-style: normal; line-height: 16px; white-space: nowrap; }
.tile p { margin: 0; line-height: 16px; }
.folder { grid-template-columns: repeat(3, 33.300px); grid-auto-rows: 33.300px; place-content: start; }
.glyph { font: 700 7px "Open Sans", sans-serif; fill: #fff; text-anchor: middle; letter-spacing: 0; }
.glyph.s { font-size: 12px; }
.mail { place-items: start center; padding: 15px 16px; text-align: center; }
.mail svg { position: absolute; right: 8px; bottom: 6px; }
.spotify { place-items: start; padding: 15px 0 0 7px; }
.spotify svg { position: absolute; right: 10px; bottom: 7px; }
.dn3 { margin-top: 3px; }
.linkedin { background: #0a66c2; border-radius: 6px; fill: #4d4d4d; }
.linkedin text { font: 700 92px "Open Sans", sans-serif; letter-spacing: 0; }
.disney { background: linear-gradient(#040a28, #07245a 60%, #0a3d86); }
.disney text { font: italic 700 22px "DejaVu Serif", serif; fill: #fff; letter-spacing: 0; }
.play { grid-template-columns: 33px 34px 33px; grid-auto-rows: 33px; place-content: start; }
.mini { width: 100%; height: 33px; display: grid; place-items: center; }
.prime { background: #1a98ff; color: #0b1a2c; font: 700 9.500px/9px "Open Sans", sans-serif; letter-spacing: -.1px; align-content: center; }
.netflix { background: #000; color: #e50914; font: 700 7.500px "Liberation Sans", sans-serif; letter-spacing: -.9px; }

.taskbar { height: 40px; flex: none; display: flex; background: #1c1c1c; color: #fff; position: relative; z-index: 6; }
.winbtn { width: 48px; background: #484848; display: grid; place-items: center; }
.tsearch { width: 288px; border: 2px solid #0078d7; background: #fff; display: flex; align-items: center; padding-left: 10px; color: #111; font-size: 15px; letter-spacing: -.52px; white-space: nowrap; }
.tsearch span { margin-left: 11px; width: 182px; }
.pins { display: flex; }
.pins span { width: 49px; height: 40px; display: grid; place-items: center; }
.pins span + span { padding-left: 1px; }
.pins .run { background: linear-gradient(#76b9ed, #76b9ed) 5px bottom / 40px 2px no-repeat; }
.tray { margin-left: auto; display: flex; align-items: center; font-size: 15px; letter-spacing: -.65px; white-space: nowrap; }
.weather { margin-left: 36px; }
.temp { margin-left: 7px; width: 31px; } .cloudy { margin-left: 8px; width: 87px; }
.up { margin-left: 23px; margin-right: 9px; }
.ic { margin-right: 9px; }
.ic path { fill: none; stroke: #fff; stroke-width: 1.200; }
.stack { display: flex; flex-direction: column; align-items: center; font-size: 12px; line-height: 18px; letter-spacing: -.45px; }
.lang { width: 26px; margin-left: -2px; } .clock { width: 62px; margin-left: 7px; }
.note { margin: 2px 0 0 13px; }
.peek { width: 1px; height: 40px; background: #666; margin: 0 3px 0 20px; }
```
